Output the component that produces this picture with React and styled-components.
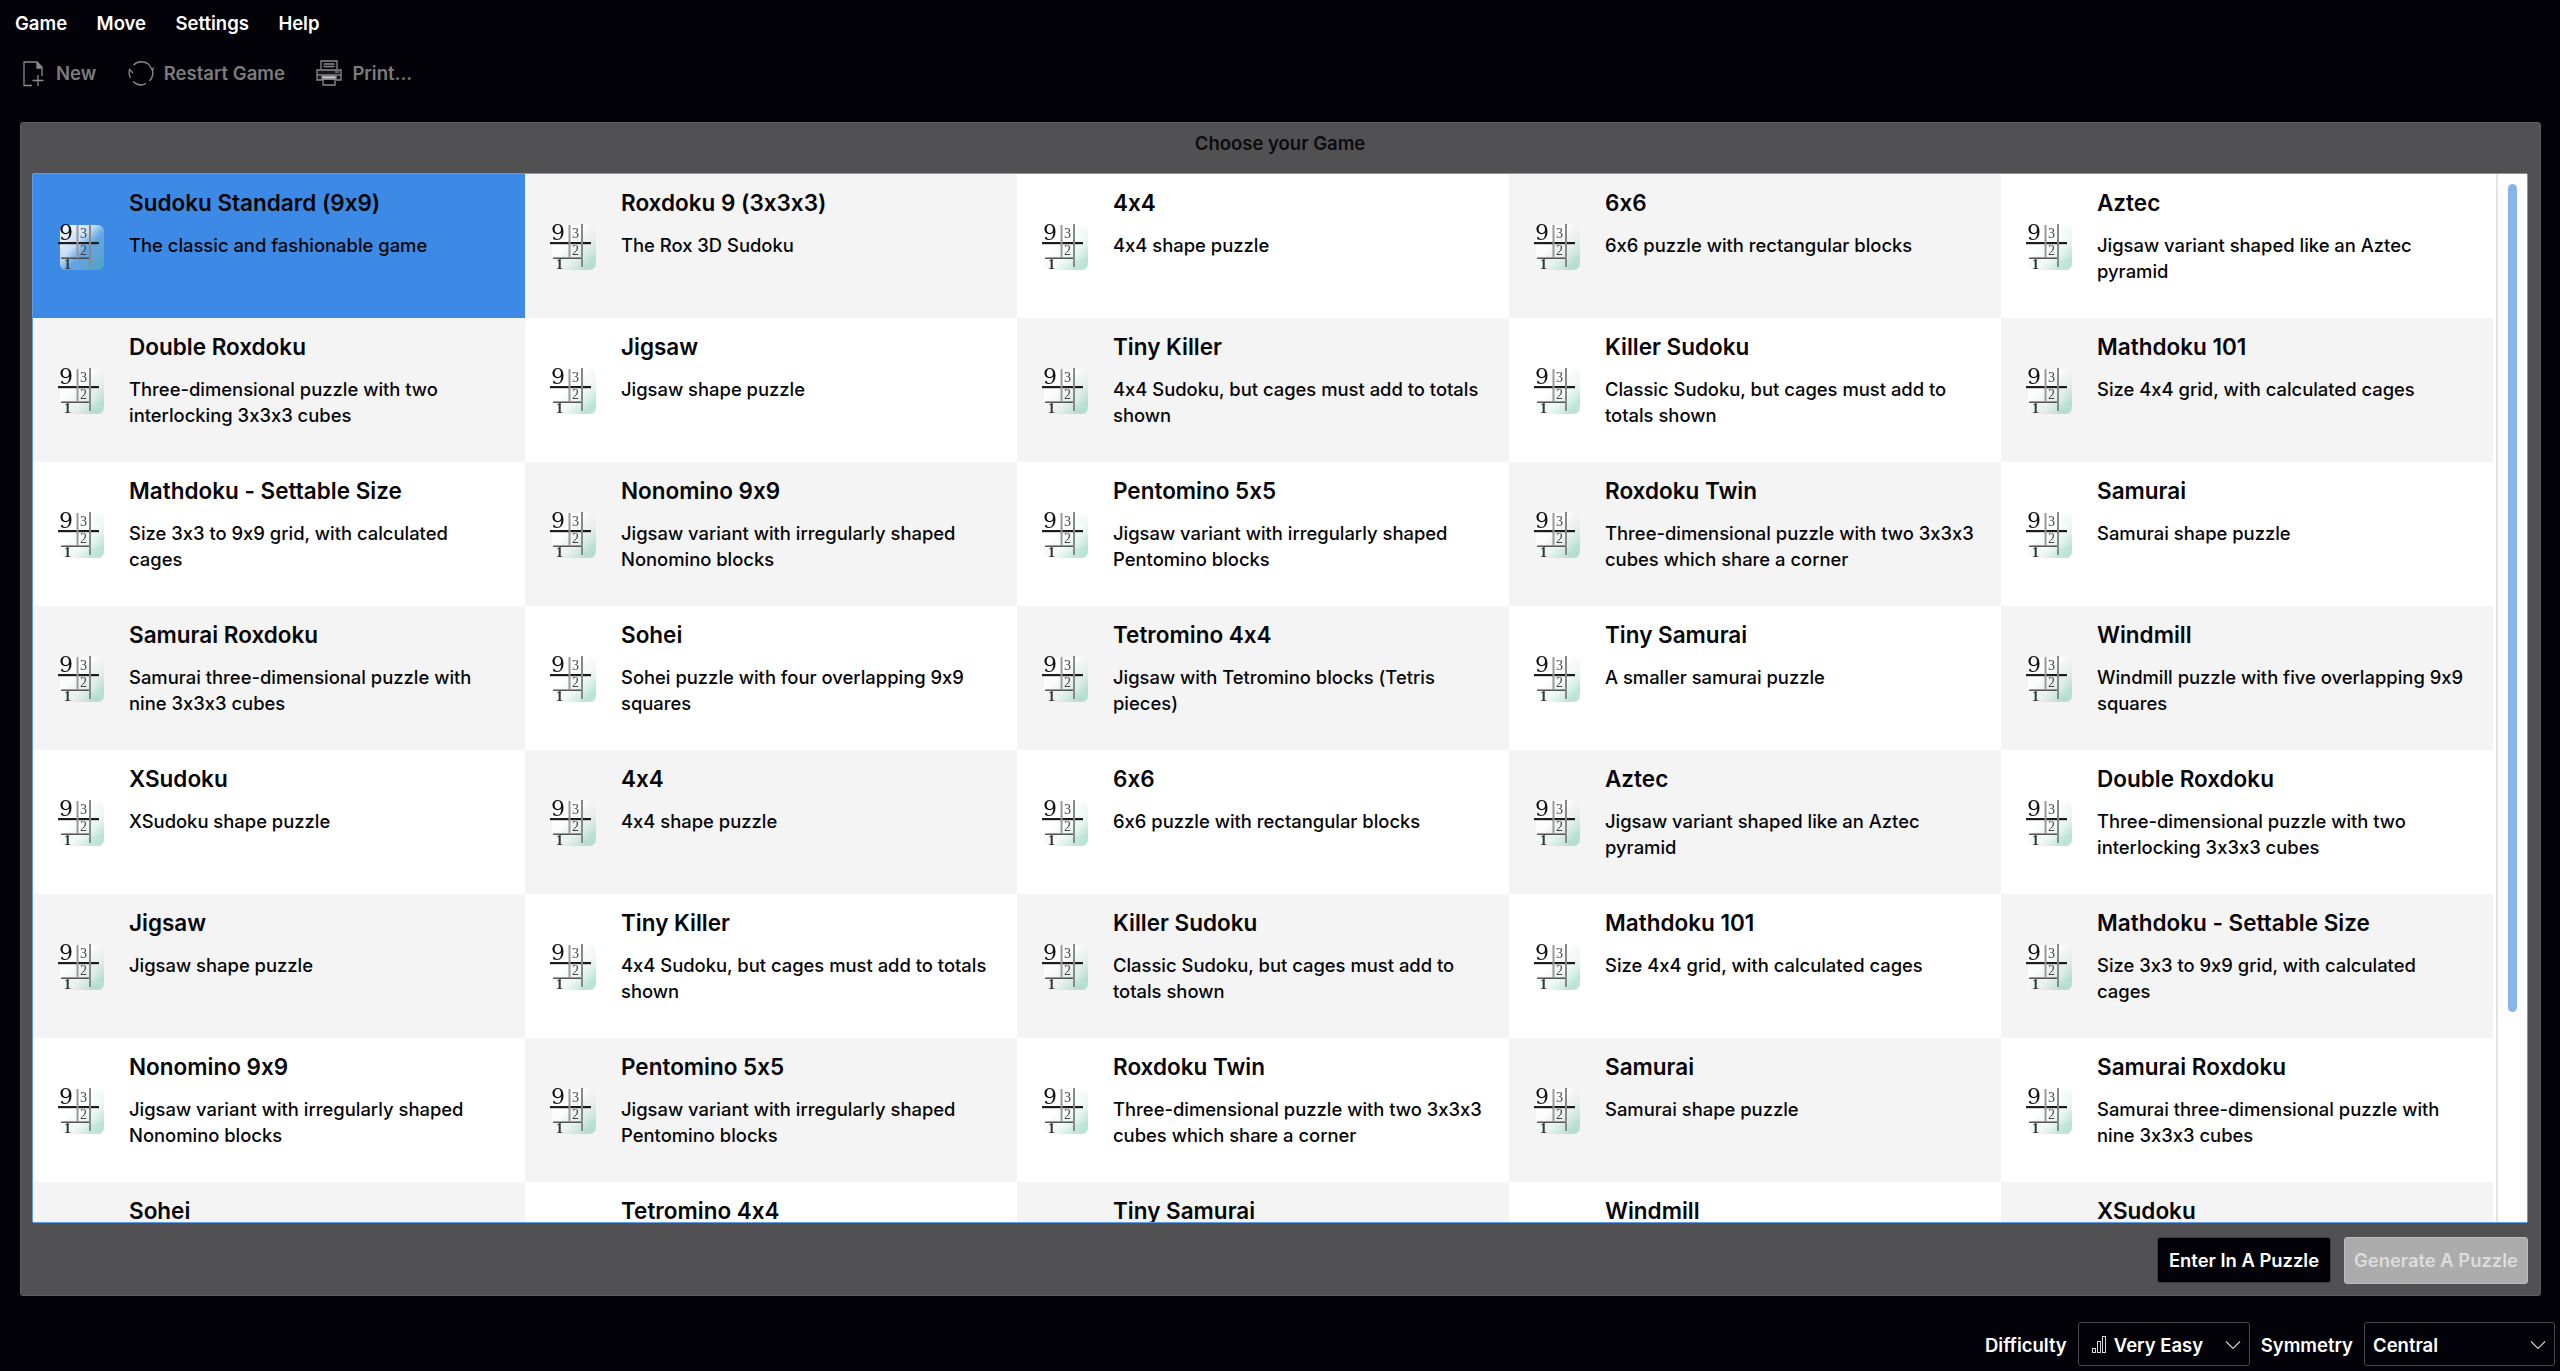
import React from "react";
import styled, { createGlobalStyle } from "styled-components";

const games = {
  standard: ["Sudoku Standard (9x9)", "The classic and fashionable game"],
  roxdoku: ["Roxdoku 9 (3x3x3)", "The Rox 3D Sudoku"],
  four: ["4x4", "4x4 shape puzzle"],
  six: ["6x6", "6x6 puzzle with rectangular blocks"],
  aztec: ["Aztec", "Jigsaw variant shaped like an Aztec pyramid"],
  double: ["Double Roxdoku", "Three-dimensional puzzle with two interlocking 3x3x3 cubes"],
  jigsaw: ["Jigsaw", "Jigsaw shape puzzle"],
  tinyKiller: ["Tiny Killer", "4x4 Sudoku, but cages must add to totals shown"],
  killer: ["Killer Sudoku", "Classic Sudoku, but cages must add to totals shown"],
  math101: ["Mathdoku 101", "Size 4x4 grid, with calculated cages"],
  mathSize: ["Mathdoku - Settable Size", "Size 3x3 to 9x9 grid, with calculated cages"],
  nonomino: ["Nonomino 9x9", "Jigsaw variant with irregularly shaped Nonomino blocks"],
  pentomino: ["Pentomino 5x5", "Jigsaw variant with irregularly shaped Pentomino blocks"],
  twin: ["Roxdoku Twin", "Three-dimensional puzzle with two 3x3x3 cubes which share a corner"],
  samurai: ["Samurai", "Samurai shape puzzle"],
  samuraiRox: ["Samurai Roxdoku", "Samurai three-dimensional puzzle with nine 3x3x3 cubes"],
  sohei: ["Sohei", "Sohei puzzle with four overlapping 9x9 squares"],
  tetromino: ["Tetromino 4x4", "Jigsaw with Tetromino blocks (Tetris pieces)"],
  tinySamurai: ["Tiny Samurai", "A smaller samurai puzzle"],
  windmill: ["Windmill", "Windmill puzzle with five overlapping 9x9 squares"],
  xsudoku: ["XSudoku", "XSudoku shape puzzle"],
};

const repeated = [
  "four", "six", "aztec", "double", "jigsaw", "tinyKiller", "killer", "math101", "mathSize",
  "nonomino", "pentomino", "twin", "samurai", "samuraiRox", "sohei", "tetromino", "tinySamurai",
  "windmill", "xsudoku",
];
const order = ["standard", "roxdoku", ...repeated, ...repeated];

const GlobalStyle = createGlobalStyle`
  html, body { margin: 0; padding: 0; background: #020208; }
  body {
    font-family: "Inter", "Noto Sans", sans-serif;
    font-feature-settings: "calt" 0;
  }
`;

const Page = styled.div`
  height: 1371px;
  overflow: hidden;
  display: flex;
  flex-direction: column;
  color: #fff;
  background: #020208;
`;

const MenuBar = styled.div`
  display: flex;
  gap: 29.5px;
  height: 46px;
  align-items: center;
  padding-left: 15px;
  font-size: 18.5px;
  font-weight: 600;
`;

const ToolBar = styled.div`
  display: flex;
  align-items: center;
  height: 54px;
  padding-left: 22px;
  gap: 31.5px;
`;

const Tool = styled.div`
  display: flex;
  align-items: center;
  gap: 10px;
  color: #7b7b7c;
  font-size: 18.5px;
  font-weight: 600;
`;

const Panel = styled.div`
  margin: 22px 19px 0 20px;
  height: 1174px;
  box-sizing: border-box;
  background: #515153;
  border: 1px solid #5e5e60;
  border-radius: 3px;
  padding: 0 12px 0 11px;
  display: flex;
  flex-direction: column;
`;

const PanelTitle = styled.div`
  height: 50px;
  line-height: 41px;
  text-align: center;
  color: #0c0c0e;
  font-size: 18.5px;
  font-weight: 600;
`;

const List = styled.div`
  height: 1050px;
  box-sizing: border-box;
  background: #fff;
  border: 1px solid #5f9de6;
  border-radius: 2px;
  overflow: hidden;
  display: flex;
`;

const Grid = styled.div`
  flex: none;
  display: grid;
  grid-template-columns: repeat(5, 492px);
  grid-auto-rows: 144px;
`;

const ScrollTrack = styled.div`
  flex: 1;
  box-sizing: border-box;
  padding: 10px 10px 0 15px;
  background: linear-gradient(to right, #fff 3px, #e2e2e2 3px, #e2e2e2 5px, #fff 5px);
`;

const ScrollThumb = styled.div`
  height: 828px;
  background: #85b5ea;
  border-radius: 5px;
`;

const Cell = styled.div`
  display: flex;
  align-items: flex-start;
  box-sizing: border-box;
  padding: 14px 0 0 25px;
  gap: 23px;
  color: #060608;
  background: ${(p) => (p.$selected ? "#3c89e6" : p.$striped ? "#f4f4f4" : "#fff")};
`;

const IconBox = styled.div`
  flex: none;
  width: 48px;
  height: 48px;
  margin-top: 36px;
`;

const CellText = styled.div`
  display: flex;
  flex-direction: column;
  gap: 14px;
  width: 375px;
`;

const Title = styled.div`
  font-size: 22.5px;
  line-height: 30px;
  font-weight: 600;
`;

const Desc = styled.div`
  font-size: 18.4px;
  line-height: 26px;
  font-weight: 500;
`;

const Footer = styled.div`
  display: flex;
  justify-content: flex-end;
  align-items: center;
  gap: 13px;
  height: 72px;
  padding-top: 2px;
  box-sizing: border-box;
`;

const ActionButton = styled.div`
  display: flex;
  align-items: center;
  justify-content: center;
  box-sizing: border-box;
  height: ${(p) => (p.$disabled ? "47px" : "46px")};
  width: ${(p) => (p.$disabled ? "184px" : "174px")};
  border-radius: 3px;
  font-size: 18.4px;
  font-weight: 600;
  color: ${(p) => (p.$disabled ? "#dcdcdc" : "#fff")};
  background: ${(p) => (p.$disabled ? "#acacac" : "#020208")};
  border: 1px solid ${(p) => (p.$disabled ? "#bcbcbc" : "#3e3e40")};
`;

const StatusBar = styled.div`
  display: flex;
  justify-content: flex-end;
  align-items: center;
  height: 44px;
  margin-top: 26px;
  padding-right: 5px;
  font-size: 18.5px;
  font-weight: 600;
`;

const Label = styled.span`
  margin: 2px 11px 0;
`;

const Select = styled.div`
  display: flex;
  align-items: center;
  box-sizing: border-box;
  height: 44px;
  width: ${(p) => p.$width}px;
  padding: 2px 8px 0 ${(p) => p.$indent}px;
  gap: 8px;
  border: 1px solid #4a4a4e;
  border-radius: 3px;
`;

const SelectValue = styled.span`
  flex: 1;
`;

function PuzzleIcon({ id }) {
  return (
    <svg width="48" height="48" viewBox="0 0 48 48">
      <defs>
        <linearGradient id={id} x1="0" y1="0" x2="1" y2="1">
          <stop offset="0" stopColor="#fff" stopOpacity="1" />
          <stop offset="0.4" stopColor="#fff" stopOpacity="0.7" />
          <stop offset="0.58" stopColor="#cfeee0" stopOpacity="0.25" />
          <stop offset="0.85" stopColor="#6ec6a6" stopOpacity="0.46" />
        </linearGradient>
      </defs>
      <rect x="2" y="1" width="44" height="45" rx="6" fill={`url(#${id})`} />
      <g style={{ filter: "blur(0.4px)" }}>
        <text x="1" y="16" fontSize="22" fontFamily="DejaVu Serif, serif" fill="#111">9</text>
        <text x="22" y="14" fontSize="14" fontFamily="Liberation Serif, serif" fill="#444">3</text>
        <text x="22" y="31" fontSize="14" fontFamily="Liberation Serif, serif" fill="#444">2</text>
        <text x="6" y="45" fontSize="14" fontWeight="700" fontFamily="Liberation Serif, serif" fill="#333">1</text>
        <rect x="0" y="18" width="41" height="2.2" fill="#1c1c1c" />
        <rect x="3" y="33.5" width="29" height="1.4" fill="#444" />
        <rect x="18.5" y="1" width="2" height="33" fill="#999" />
        <rect x="31" y="0" width="2" height="43" fill="#888" />
      </g>
    </svg>
  );
}

function NewIcon() {
  return (
    <svg width="24" height="27" viewBox="0 0 24 27" fill="none" stroke="#8b8b8c" strokeWidth="1.3">
      <path d="M10 25.5H2V2h13l5 5v9" />
      <path d="M15 2v6h5" fill="#8b8b8c" />
      <path d="M16 15v11M10.5 20.5h11" />
    </svg>
  );
}

function RestartIcon() {
  return (
    <svg width="26" height="26" viewBox="0 0 26 26" fill="none" stroke="#8b8b8c" strokeWidth="1.3">
      <path d="M5.5 5A11.5 11.5 0 0 1 21 4.5" />
      <path d="M24.5 10.5A11.5 11.5 0 0 1 21.5 21" />
      <path d="M18 23.7A11.5 11.5 0 0 1 5 21.5" />
      <path d="M2.5 18A11.5 11.5 0 0 1 1.5 9.5l3.5 3.5" />
      <path d="M21 4.5l3.5 6 1-3" />
    </svg>
  );
}

function PrintIcon() {
  return (
    <svg width="26" height="26" viewBox="0 0 26 26" fill="none" stroke="#8b8b8c" strokeWidth="1.3">
      <path d="M5 9V1h16v8" />
      <path d="M7.5 4h11M7.5 6.5h11" />
      <path d="M6 20H1V10h24v10h-5" fill="#8b8b8c" fillOpacity="0.15" />
      <path d="M1 15h24" />
      <path d="M6 16h14v3H6z" fill="#c9c9c9" />
      <path d="M7 19h12v6H7z" />
      <path d="M19 12h4" />
    </svg>
  );
}

function BarsIcon() {
  return (
    <svg width="14" height="18" viewBox="0 0 14 18" fill="none" stroke="#d8d8d8" strokeWidth="1">
      <rect x="0.5" y="12.5" width="3" height="4" />
      <rect x="5.5" y="5.5" width="3" height="11" />
      <rect x="10.5" y="0.5" width="3" height="16" />
    </svg>
  );
}

function Chevron() {
  return (
    <svg width="16" height="10" viewBox="0 0 16 10" fill="none" stroke="#cfcfcf" strokeWidth="1.2">
      <path d="M1 1.5l7 7 7-7" />
    </svg>
  );
}

export default function App() {
  return (
    <Page>
      <GlobalStyle />
      <MenuBar>
        <span>Game</span>
        <span>Move</span>
        <span>Settings</span>
        <span>Help</span>
      </MenuBar>
      <ToolBar>
        <Tool><NewIcon />New</Tool>
        <Tool><RestartIcon />Restart Game</Tool>
        <Tool><PrintIcon />Print...</Tool>
      </ToolBar>
      <Panel>
        <PanelTitle>Choose your Game</PanelTitle>
        <List>
          <Grid>
            {order.map((key, i) => (
              <Cell key={i} $selected={i === 0} $striped={i % 2 === 1}>
                <IconBox><PuzzleIcon id={`puzzle-${i}`} /></IconBox>
                <CellText>
                  <Title>{games[key][0]}</Title>
                  <Desc>{games[key][1]}</Desc>
                </CellText>
              </Cell>
            ))}
          </Grid>
          <ScrollTrack>
            <ScrollThumb />
          </ScrollTrack>
        </List>
        <Footer>
          <ActionButton>Enter In A Puzzle</ActionButton>
          <ActionButton $disabled>Generate A Puzzle</ActionButton>
        </Footer>
      </Panel>
      <StatusBar>
        <Label>Difficulty</Label>
        <Select $width={172} $indent={13}>
          <BarsIcon />
          <SelectValue>Very Easy</SelectValue>
          <Chevron />
        </Select>
        <Label>Symmetry</Label>
        <Select $width={191} $indent={8}>
          <SelectValue>Central</SelectValue>
          <Chevron />
        </Select>
      </StatusBar>
    </Page>
  );
}
